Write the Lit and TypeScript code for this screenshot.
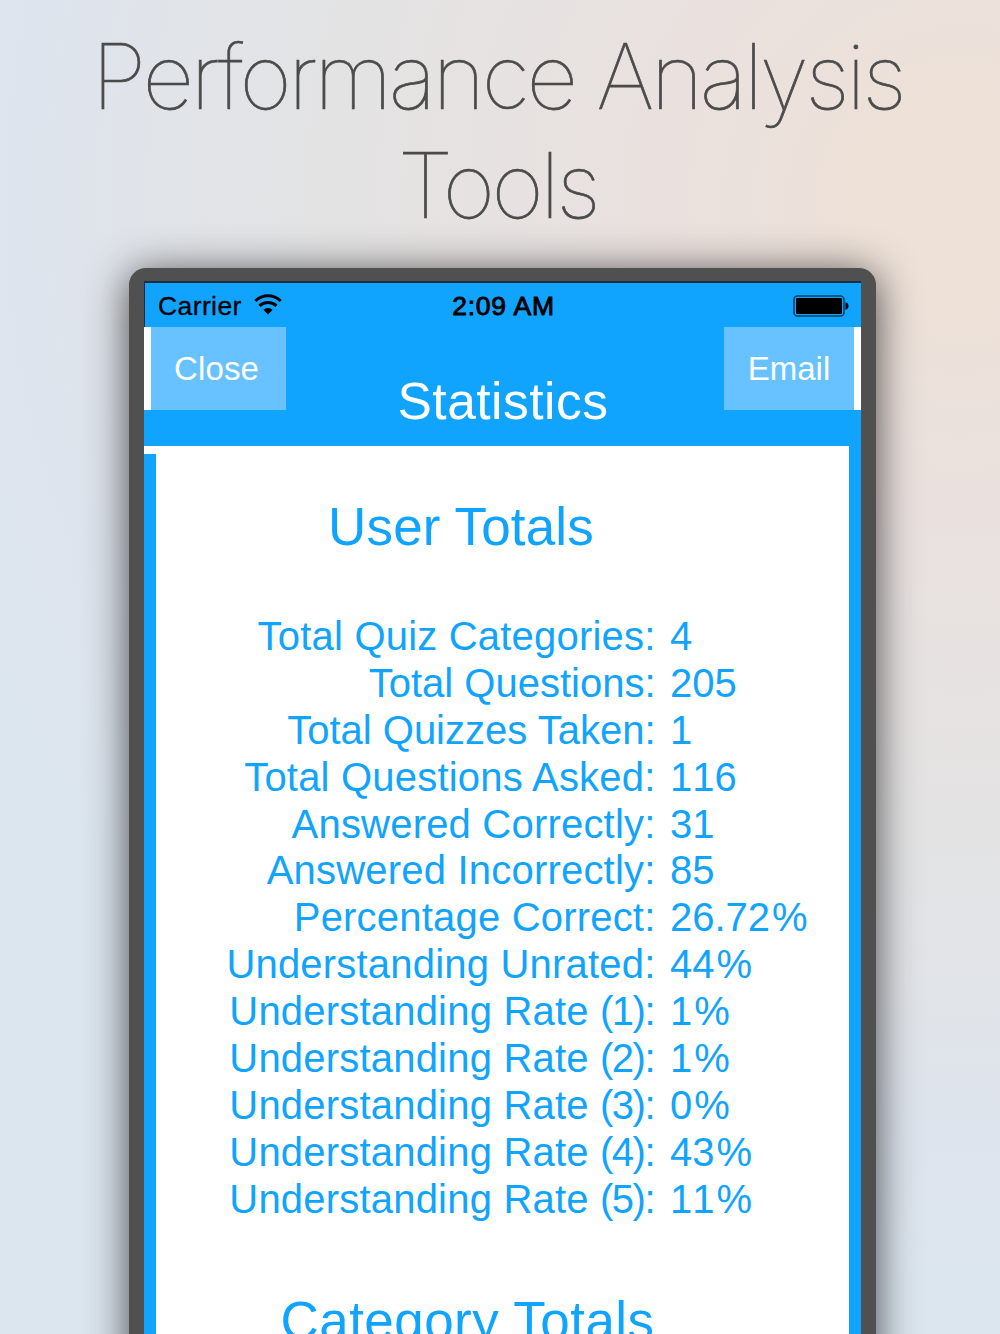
import { LitElement, html, css } from "lit";
import { customElement } from "lit/decorators.js";
import { classMap } from "lit/directives/class-map.js";

interface Stat {
  label: string;
  level?: string;
  value: string;
  percent?: boolean;
  snug?: boolean;
}

const TOTALS: Stat[] = [
  { label: "Total Quiz Categories:", value: "4" },
  { label: "Total Questions:", value: "205", snug: true },
  { label: "Total Quizzes Taken:", value: "1", snug: true },
  { label: "Total Questions Asked:", value: "116" },
  { label: "Answered Correctly:", value: "31" },
  { label: "Answered Incorrectly:", value: "85" },
  { label: "Percentage Correct:", value: "26.72", percent: true },
  { label: "Understanding Unrated:", value: "44", percent: true },
  { label: "Understanding Rate ", level: "(1):", value: "1", percent: true },
  { label: "Understanding Rate ", level: "(2):", value: "1", percent: true },
  { label: "Understanding Rate ", level: "(3):", value: "0", percent: true },
  { label: "Understanding Rate ", level: "(4):", value: "43", percent: true },
  { label: "Understanding Rate ", level: "(5):", value: "11", percent: true },
];

@customElement("status-bar")
class StatusBar extends LitElement {
  static styles = css`
    :host {
      display: grid;
      grid-template-columns: 1fr auto 1fr;
      align-items: center;
      box-sizing: border-box;
      height: 44px;
      padding: 1px 12px 0 13px;
      border-left: 1px solid #0b2f47;
      color: #000;
      font-size: 26.5px;
      line-height: 43px;
    }
    .carrier {
      display: flex;
      align-items: center;
      gap: 12px;
      padding-top: 1px;
      letter-spacing: 0.4px;
      -webkit-text-stroke: 0.3px #000;
    }
    .time { padding-top: 1px; -webkit-text-stroke: 0.9px #000; letter-spacing: 0.75px; }
    .battery { justify-self: end; display: block; }
    .wifi { display: block; margin-top: -4px; }
  `;
  render() {
    return html`
      <div class="carrier">
        <span>Carrier</span>
        <svg class="wifi" width="28" height="21" viewBox="0 0 28 21">
          <g fill="none" stroke="#000" stroke-width="3">
            <path d="M1.300 7A18 18 0 0 1 26.700 7" />
            <path d="M5.500 11.800A12.500 12.500 0 0 1 22.500 11.800" />
          </g>
          <path d="M9.300 15.800A6.800 6.800 0 0 1 18.700 15.800L14 20.500Z" />
        </svg>
      </div>
      <span class="time">2:09 AM</span>
      <svg class="battery" width="56" height="22" viewBox="0 0 56 22">
        <rect x="1" y="1" width="50" height="20" rx="3.5" fill="none" stroke="#073f66" stroke-width="1.6" />
        <rect x="3" y="3" width="46" height="16" rx="1" />
        <path d="M52.500 7.300C56.500 8 56.500 14 52.500 14.700Z" />
      </svg>
    `;
  }
}

@customElement("app-root")
class AppRoot extends LitElement {
  static styles = css`
    :host {
      display: flex;
      flex-direction: column;
      align-items: center;
      height: 1334px;
      overflow: hidden;
      font-family: "Liberation Sans", Arial, sans-serif;
      background: radial-gradient(
        circle at 960px 200px,
        #ede1d8 0,
        #ede1d8 100px,
        #eae1de 290px,
        #e4e3e3 600px,
        #e1e4e8 780px,
        #dee4ed 930px,
        #dce6ef 1080px
      );
    }
    .title {
      flex: none;
      margin: 0;
      height: 268px;
      padding: 23px 5px 0 0;
      box-sizing: border-box;
      color: #4b4b4b;
      font-family: Inter, "Liberation Sans", sans-serif;
      font-weight: 100;
      font-size: 90px;
      line-height: 108.500px;
      letter-spacing: -3.400px;
      -webkit-text-stroke: 0.7px #4b4b4b;
      text-align: center;
      white-space: nowrap;
    }
    .phone {
      flex: none;
      box-sizing: border-box;
      width: 747px;
      height: 1120px;
      margin-left: 5px;
      padding: 13px 15px 0;
      border-radius: 17px;
      background: #505050;
      box-shadow: 0 5px 42px 0 rgba(25, 25, 28, 0.78);
    }
    .screen {
      height: 100%;
      box-sizing: border-box;
      border-top: 2px solid #16303f;
      background: #11a4ff;
    }
    .nav {
      display: grid;
      grid-template-columns: 142px 1fr 137px;
      align-items: start;
      height: 119px;
      color: #fff;
    }
    .action {
      box-sizing: border-box;
      height: 83px;
      background: #68c2ff;
      font-size: 33px;
      line-height: 84px;
      text-align: center;
    }
    .close { border-left: 7px solid #fff; padding-right: 4px; letter-spacing: 0.150px; }
    .email { border-right: 7px solid #fff; }
    .heading {
      font-size: 51.500px;
      line-height: 58px;
      padding: 45px 4px 0 0;
      letter-spacing: 0.500px;
      text-align: center;
    }
    .sheet {
      position: relative;
      height: 940px;
      margin: 0 12px;
      background: #fff;
      color: #11a4ff;
    }
    .notch { position: absolute; left: -12px; top: 0; width: 12px; height: 8px; background: #fff; }
    .section {
      margin: 0;
      padding-right: 83px;
      font-weight: 400;
      font-size: 53px;
      line-height: 60px;
      letter-spacing: 0.150px;
      text-align: center;
    }
    .first { padding-top: 51px; }
    .second { padding-right: 70px; letter-spacing: 0.450px; }
    .rows { padding: 56px 0 69px; }
    .row {
      display: grid;
      grid-template-columns: 499.500px 1fr;
      column-gap: 14.500px;
      font-size: 40px;
      line-height: 46.880px;
      white-space: nowrap;
    }
    .label { text-align: right; letter-spacing: 0.200px; }
    .snug { letter-spacing: 0; }
    .level { letter-spacing: -1.500px; margin-right: 1.500px; }
    .value { font-kerning: none; }
    .sign { margin-left: 2px; }
  `;
  render() {
    return html`
      <h1 class="title">Performance Analysis<br />Tools</h1>
      <div class="phone">
        <div class="screen">
          <status-bar></status-bar>
          <div class="nav">
            <div class="action close">Close</div>
            <div class="heading">Statistics</div>
            <div class="action email">Email</div>
          </div>
          <div class="sheet">
            <div class="notch"></div>
            <h2 class="section first">User Totals</h2>
            <div class="rows">
              ${TOTALS.map(
                (s) => html`<div class="row">
                  <span class=${classMap({ label: true, snug: !!s.snug })}
                    >${s.label}${s.level ? html`<span class="level">${s.level}</span>` : ""}</span
                  ><span class="value">${s.value}${s.percent ? html`<span class="sign">%</span>` : ""}</span>
                </div>`,
              )}
            </div>
            <h2 class="section second">Category Totals</h2>
          </div>
        </div>
      </div>
    `;
  }
}
